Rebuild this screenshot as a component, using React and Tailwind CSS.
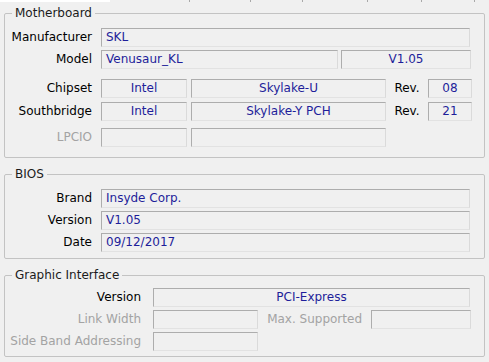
import React from "react";

// sunken read-only box, like a win32 static edit
function Field({ w, center, children, className = "" }) {
  return (
    <div
      className={
        "h-[19px] shrink-0 border border-[#adadad] border-r-[#dadada] border-b-[#e2e2e2] leading-[17px] text-[#1e1e9a] whitespace-nowrap overflow-hidden " +
        (center ? "text-center " : "pl-[4px] ") +
        className
      }
      style={{ width: w }}
    >
      {children}
    </div>
  );
}

function Label({ w, dim, children }) {
  return (
    <div
      className={"shrink-0 text-right whitespace-nowrap leading-[19px] " + (dim ? "text-[#a3a3a3]" : "text-black")}
      style={{ width: w }}
    >
      {children}
    </div>
  );
}

function Group({ title, className = "", children }) {
  return (
    <fieldset className={"mx-[4px] border border-[#c3c3c3] rounded-[2px] " + className}>
      <legend className="ml-[7px] px-[3px] leading-[16px] text-[#1b1b1b]">{title}</legend>
      {children}
    </fieldset>
  );
}

const TABS = [110, 80, 61, 52, 65, 54, 53];

export default function App() {
  return (
    <div className="w-[489px] h-[362px] bg-[#f0f0f0] font-['DejaVu_Sans',Verdana,sans-serif] text-[12px] overflow-hidden">
      {/* bottoms of the tab strip */}
      <div className="flex h-[2px]">
        {TABS.map((w, i) => (
          <div
            key={i}
            className={i === 0 ? "bg-white" : "bg-[#f0f0f0] border-r border-[#a9a9a9]"}
            style={{ width: w }}
          />
        ))}
      </div>

      <Group title="Motherboard" className="mt-[3px] pb-[10px]">
        <div className="flex mt-[7px]">
          <Label w={87}>Manufacturer</Label>
          <Field w={369} className="ml-[9px]">SKL</Field>
        </div>
        <div className="flex mt-[3px]">
          <Label w={87}>Model</Label>
          <Field w={237} className="ml-[9px]">Venusaur_KL</Field>
          <Field w={130} center className="ml-[3px]">V1.05</Field>
        </div>
        <div className="flex mt-[10px]">
          <Label w={87}>Chipset</Label>
          <Field w={86} center className="ml-[9px]">Intel</Field>
          <Field w={195} center className="ml-[4px]">Skylake-U</Field>
          <div className="w-[42px] text-center leading-[19px]">Rev.</div>
          <Field w={44} center>08</Field>
        </div>
        <div className="flex mt-[4px]">
          <Label w={87}>Southbridge</Label>
          <Field w={86} center className="ml-[9px]">Intel</Field>
          <Field w={195} center className="ml-[4px]">Skylake-Y PCH</Field>
          <div className="w-[42px] text-center leading-[19px]">Rev.</div>
          <Field w={44} center>21</Field>
        </div>
        <div className="flex mt-[7px]">
          <Label w={87} dim>LPCIO</Label>
          <Field w={86} className="ml-[9px]" />
          <Field w={195} className="ml-[4px]" />
        </div>
      </Group>

      <Group title="BIOS" className="mt-[8px] pb-[6px]">
        <div className="flex mt-[7px]">
          <Label w={87}>Brand</Label>
          <Field w={369} className="ml-[9px]">Insyde Corp.</Field>
        </div>
        <div className="flex mt-[3px]">
          <Label w={87}>Version</Label>
          <Field w={369} className="ml-[9px]">V1.05</Field>
        </div>
        <div className="flex mt-[3px]">
          <Label w={87}>Date</Label>
          <Field w={369} className="ml-[9px]">09/12/2017</Field>
        </div>
      </Group>

      <Group title="Graphic Interface" className="mt-[8px] pb-[5px]">
        <div className="flex mt-[5px]">
          <Label w={136}>Version</Label>
          <Field w={317} center className="ml-[12px]">PCI-Express</Field>
        </div>
        <div className="flex mt-[3px]">
          <Label w={136} dim>Link Width</Label>
          <Field w={105} className="ml-[12px]" />
          <Label w={104} dim>Max. Supported</Label>
          <Field w={100} className="ml-[9px]" />
        </div>
        <div className="flex mt-[3px]">
          <Label w={136} dim>Side Band Addressing</Label>
          <Field w={105} className="ml-[12px]" />
        </div>
      </Group>
    </div>
  );
}
